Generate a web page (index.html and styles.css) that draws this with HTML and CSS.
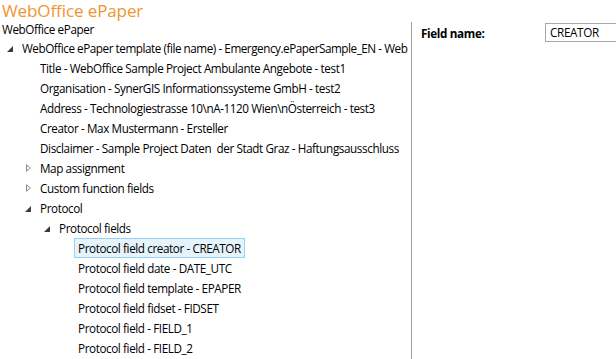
FILE: index.html
```html
<!DOCTYPE html>
<html>
<head>
<meta charset="utf-8">
<link rel="stylesheet" href="styles.css">
</head>
<body>
<div class="app">
  <h1 class="title">WebOffice ePaper</h1>
  <div class="main">
    <div class="left">
      <div class="sub">WebOffice ePaper</div>
      <ul class="tree">
        <li class="row l0"><span class="tg open"></span><span class="lbl">WebOffice ePaper template (file name) - Emergency.ePaperSample_EN - Web</span></li>
        <li class="row l1"><span class="tg"></span><span class="lbl">Title - WebOffice Sample Project Ambulante Angebote - test1</span></li>
        <li class="row l1"><span class="tg"></span><span class="lbl">Organisation - SynerGIS Informationssysteme GmbH - test2</span></li>
        <li class="row l1"><span class="tg"></span><span class="lbl">Address - Technologiestrasse 10\nA-1120 Wien\nÖsterreich - test3</span></li>
        <li class="row l1"><span class="tg"></span><span class="lbl">Creator - Max Mustermann - Ersteller</span></li>
        <li class="row l1"><span class="tg"></span><span class="lbl">Disclaimer - Sample Project Daten&nbsp; der Stadt Graz - Haftungsausschluss</span></li>
        <li class="row l1"><span class="tg closed"></span><span class="lbl">Map assignment</span></li>
        <li class="row l1"><span class="tg closed"></span><span class="lbl">Custom function fields</span></li>
        <li class="row l1"><span class="tg open"></span><span class="lbl">Protocol</span></li>
        <li class="row l2"><span class="tg open"></span><span class="lbl">Protocol fields</span></li>
        <li class="row l3"><span class="tg"></span><span class="lbl sel">Protocol field creator - CREATOR</span></li>
        <li class="row l3"><span class="tg"></span><span class="lbl">Protocol field date - DATE_UTC</span></li>
        <li class="row l3"><span class="tg"></span><span class="lbl">Protocol field template - EPAPER</span></li>
        <li class="row l3"><span class="tg"></span><span class="lbl">Protocol field fidset - FIDSET</span></li>
        <li class="row l3"><span class="tg"></span><span class="lbl">Protocol field - FIELD_1</span></li>
        <li class="row l3"><span class="tg"></span><span class="lbl">Protocol field - FIELD_2</span></li>
      </ul>
    </div>
    <div class="right">
      <div class="field">
        <label class="flabel">Field name:</label>
        <div class="input">CREATOR</div>
      </div>
    </div>
  </div>
</div>
</body>
</html>
```
FILE: styles.css
```css
html, body {
  margin: 0;
  padding: 0;
  background: #fff;
  overflow: hidden;
}
body {
  font-family: "Open Sans", "Noto Sans", sans-serif;
  font-size: 11.7px;
  color: #000;
}
.app {
  width: 616px;
  height: 359px;
  overflow: hidden;
}
.title {
  margin: 0;
  padding: 0 0 0 2px;
  height: 22px;
  line-height: 21px;
  font-size: 17px;
  font-weight: 400;
  color: #f0952f;
  letter-spacing: -0.1px;
}
.main {
  display: flex;
  height: 337px;
}
.left {
  width: 411px;
  flex: none;
  overflow: hidden;
  border-right: 1px solid #a0a0a0;
}
.sub {
  padding-left: 2px;
  height: 16px;
  line-height: 14px;
  letter-spacing: -0.4px;
}
.tree {
  list-style: none;
  margin: 0;
  padding: 0;
}
.row {
  display: flex;
  align-items: center;
  height: 20px;
  white-space: nowrap;
  letter-spacing: -0.4px;
}
.l0 { padding-left: 3px; letter-spacing: -0.45px; }
.l1 { padding-left: 21px; }
.l2 { padding-left: 40px; }
.l3 { padding-left: 59px; }
.tg {
  width: 15px;
  height: 20px;
  flex: none;
  position: relative;
}
.tg.open::after {
  content: "";
  position: absolute;
  left: 4px;
  top: 8px;
  width: 0;
  height: 0;
  border-left: 6px solid transparent;
  border-bottom: 6px solid #3c3c3c;
}
.tg.closed::after {
  content: "";
  position: absolute;
  left: 5px;
  top: 6px;
  width: 0;
  height: 0;
  border-top: 4.5px solid transparent;
  border-bottom: 4.5px solid transparent;
  border-left: 5px solid #8a8a8a;
}
.tg.closed::before {
  content: "";
  position: absolute;
  left: 6px;
  top: 8px;
  width: 0;
  height: 0;
  border-top: 2.5px solid transparent;
  border-bottom: 2.5px solid transparent;
  border-left: 3px solid #fff;
  z-index: 1;
}
.lbl {
  padding: 0 3px;
  height: 18px;
  line-height: 18px;
  border: 1px solid transparent;
}
.lbl.sel {
  background: #e5f3fb;
  border-color: #98d0f4;
}
.right {
  flex: 1;
  padding: 1px 0 0 9px;
}
.field {
  display: flex;
  align-items: center;
}
.flabel {
  width: 124px;
  font-weight: 700;
  letter-spacing: -0.35px;
}
.input {
  flex: 1;
  height: 17px;
  line-height: 17px;
  border: 1px solid #a8a8a8;
  border-right: none;
  padding-left: 4px;
  letter-spacing: -0.35px;
}
```
